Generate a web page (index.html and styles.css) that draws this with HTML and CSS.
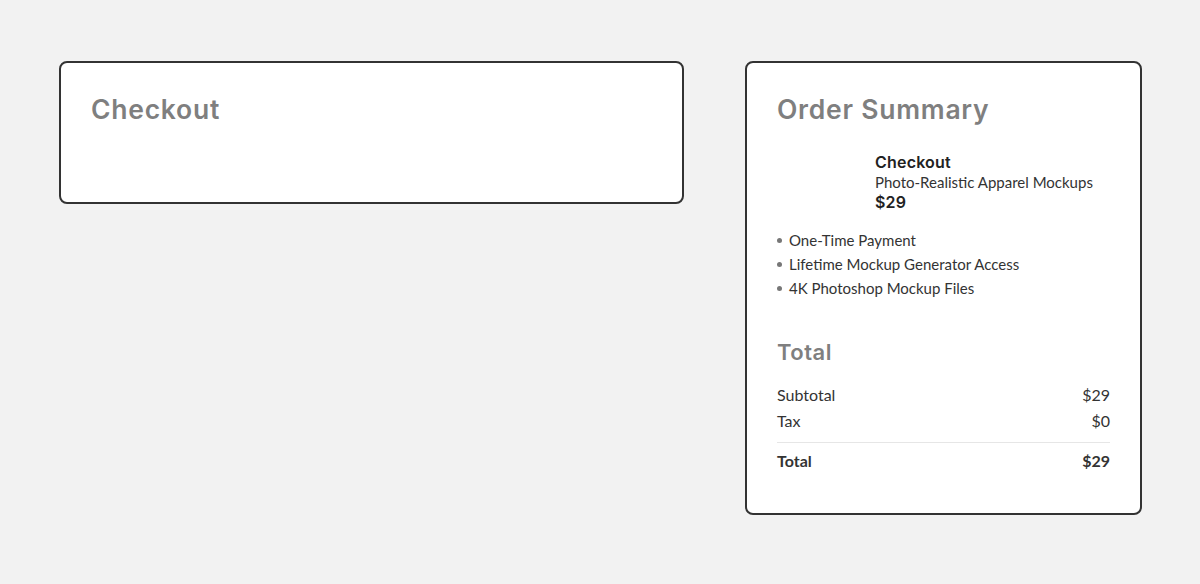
FILE: index.html
```html
<!DOCTYPE html>
<html lang="en">
<head>
<meta charset="utf-8">
<title>Checkout</title>
<link rel="stylesheet" href="styles.css">
</head>
<body>
<main class="page">
  <section class="card checkout">
    <h2 class="card-title">Checkout</h2>
  </section>
  <aside class="card summary">
    <h2 class="card-title">Order Summary</h2>
    <div class="product">
      <div class="product-thumb"></div>
      <div class="product-info">
        <div class="product-name">Checkout</div>
        <div class="product-desc">Photo-Realistic Apparel Mockups</div>
        <div class="product-price">$29</div>
      </div>
    </div>
    <ul class="features">
      <li>One-Time Payment</li>
      <li>Lifetime Mockup Generator Access</li>
      <li>4K Photoshop Mockup Files</li>
    </ul>
    <h3 class="total-title">Total</h3>
    <div class="totals">
      <div class="row"><span>Subtotal</span><span>$29</span></div>
      <div class="row"><span>Tax</span><span>$0</span></div>
      <div class="row grand"><span>Total</span><span>$29</span></div>
    </div>
  </aside>
</main>
</body>
</html>
```

FILE: styles.css
```css
* { box-sizing: border-box; }
html, body { margin: 0; padding: 0; }
body {
  background: #f2f2f2;
  font-family: "Lato", "Liberation Sans", sans-serif;
  color: #333;
}
.page {
  padding: 61px 58px 0 59px;
  display: flex;
  align-items: flex-start;
  gap: 61px;
}
.card {
  background: #fff;
  border: 2px solid #333;
  border-radius: 8px;
  padding: 30px;
}
.checkout {
  width: 625px;
  height: 143px;
}
.summary {
  width: 397px;
  padding-bottom: 39px;
}
.card-title {
  margin: 0;
  font-family: "Inter", "Open Sans", sans-serif;
  font-weight: 600;
  font-size: 26.5px;
  line-height: 32px;
  color: #7f7f7f;
  letter-spacing: 0.75px;
}
.product {
  display: flex;
  gap: 10px;
  margin-top: 27px;
}
.product-thumb {
  width: 88px;
  flex: none;
}
.product-info {
  display: flex;
  flex-direction: column;
}
.product-name, .product-price {
  font-family: "Inter", "Open Sans", sans-serif;
  font-weight: 600;
  font-size: 16px;
  line-height: 20px;
  color: #222;
  letter-spacing: 0.2px;
}
.product-desc {
  font-size: 15px;
  line-height: 20px;
  color: #333;
}
.features {
  list-style: none;
  margin: 16px 0 0;
  padding: 0;
}
.features li {
  position: relative;
  padding-left: 12px;
  font-size: 15px;
  line-height: 24px;
  color: #333;
}
.features li::before {
  content: "";
  position: absolute;
  left: 0;
  top: 10px;
  width: 5px;
  height: 5px;
  border-radius: 50%;
  background: #777;
}
.total-title {
  margin: 38px 0 0;
  font-family: "Inter", "Open Sans", sans-serif;
  font-weight: 600;
  font-size: 22px;
  line-height: 28px;
  color: #7f7f7f;
  letter-spacing: 0.5px;
}
.totals {
  margin-top: 16px;
}
.row {
  display: flex;
  justify-content: space-between;
  font-size: 16px;
  line-height: 26px;
  color: #333;
}
.row.grand {
  margin-top: 8px;
  padding-top: 5px;
  border-top: 1px solid #e6e6e6;
  font-weight: 700;
}
```
